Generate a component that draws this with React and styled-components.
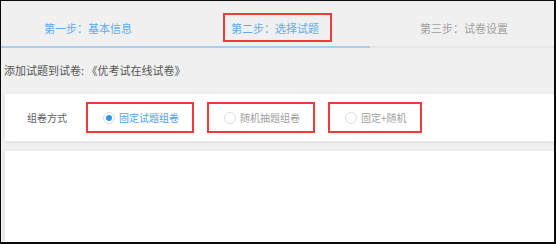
import React from "react";
import styled, { createGlobalStyle } from "styled-components";

const GlobalStyle = createGlobalStyle`
  html, body {
    margin: 0;
    padding: 0;
    background: #ffffff;
  }
  * {
    box-sizing: border-box;
  }
`;

const Frame = styled.div`
  width: 556px;
  height: 244px;
  border-style: solid;
  border-color: #0a0a0a;
  border-width: 1px 2px 2px 1px;
  background: #f0f0f0;
  display: flex;
  flex-direction: column;
  font-family: "Noto Sans CJK SC", "Noto Sans", sans-serif;
  overflow: hidden;
`;

const StepBar = styled.div`
  height: 45px;
  padding: 8px 0 0 43px;
  display: flex;
  align-items: center;
`;

const Step = styled.span`
  font-size: 11px;
  line-height: 16px;
  white-space: nowrap;
  margin-left: ${({ $offset }) => $offset}px;
  color: ${({ $done }) => ($done ? "#5cadf0" : "#a0a0a0")};
`;

const MarkedStep = styled(Step)`
  display: flex;
  align-items: center;
  height: 29px;
  padding: 0 11px 0 6px;
  border: 2px solid #f23a3a;
`;

const Track = styled.div`
  height: 2px;
  background: #e6e6e6;
  display: flex;
`;

const TrackFill = styled.div`
  height: 2px;
  background: #a6cff1;
`;

const Title = styled.div`
  padding: 14px 3px 0;
  font-size: 11px;
  line-height: 16px;
  color: #555555;
`;

const Card = styled.div`
  margin: 16px 0 0 4px;
  height: 47px;
  background: #ffffff;
  box-shadow: 0 1px 4px rgba(0, 0, 0, 0.08);
  display: flex;
  align-items: center;
  padding-left: 22px;
`;

const FieldLabel = styled.span`
  font-size: 10px;
  line-height: 14px;
  color: #606060;
  margin-right: 19px;
`;

const Options = styled.div`
  display: flex;
  align-items: center;
  gap: 13px;
`;

const Option = styled.label`
  display: flex;
  align-items: center;
  gap: 4px;
  height: 31px;
  padding: 0 13px 0 15px;
  border: 2px solid #f23a3a;
  font-size: 10px;
  line-height: 14px;
  white-space: nowrap;
  color: ${({ $checked }) => ($checked ? "#4ba3ef" : "#a0a0a0")};
`;

const Radio = styled.span`
  width: 12px;
  height: 12px;
  border-radius: 50%;
  border: 1px solid #dcdcdc;
  background: #ffffff;
  display: flex;
  align-items: center;
  justify-content: center;

  &::after {
    content: "";
    width: 6px;
    height: 6px;
    border-radius: 50%;
    background: ${({ $checked }) => ($checked ? "#2f95ef" : "transparent")};
  }
`;

const Panel = styled.div`
  flex: 1;
  margin: 10px 0 0 4px;
  background: #ffffff;
  box-shadow: -1px 0 3px rgba(0, 0, 0, 0.06);
`;

const options = [
  { label: "固定试题组卷", checked: true },
  { label: "随机抽题组卷", checked: false },
  { label: "固定+随机", checked: false },
];

export default function App() {
  const current = 2;
  const total = 3;

  return (
    <>
      <GlobalStyle />
      <Frame>
        <StepBar>
          <Step $done $offset={0}>第一步：基本信息</Step>
          <MarkedStep $done $offset={91}>第二步：选择试题</MarkedStep>
          <Step $offset={88}>第三步：试卷设置</Step>
        </StepBar>
        <Track>
          <TrackFill style={{ width: `${(current / total) * 100}%` }} />
        </Track>
        <Title>添加试题到试卷: 《优考试在线试卷》</Title>
        <Card>
          <FieldLabel>组卷方式</FieldLabel>
          <Options>
            {options.map((o) => (
              <Option key={o.label} $checked={o.checked}>
                <Radio $checked={o.checked} />
                {o.label}
              </Option>
            ))}
          </Options>
        </Card>
        <Panel />
      </Frame>
    </>
  );
}
